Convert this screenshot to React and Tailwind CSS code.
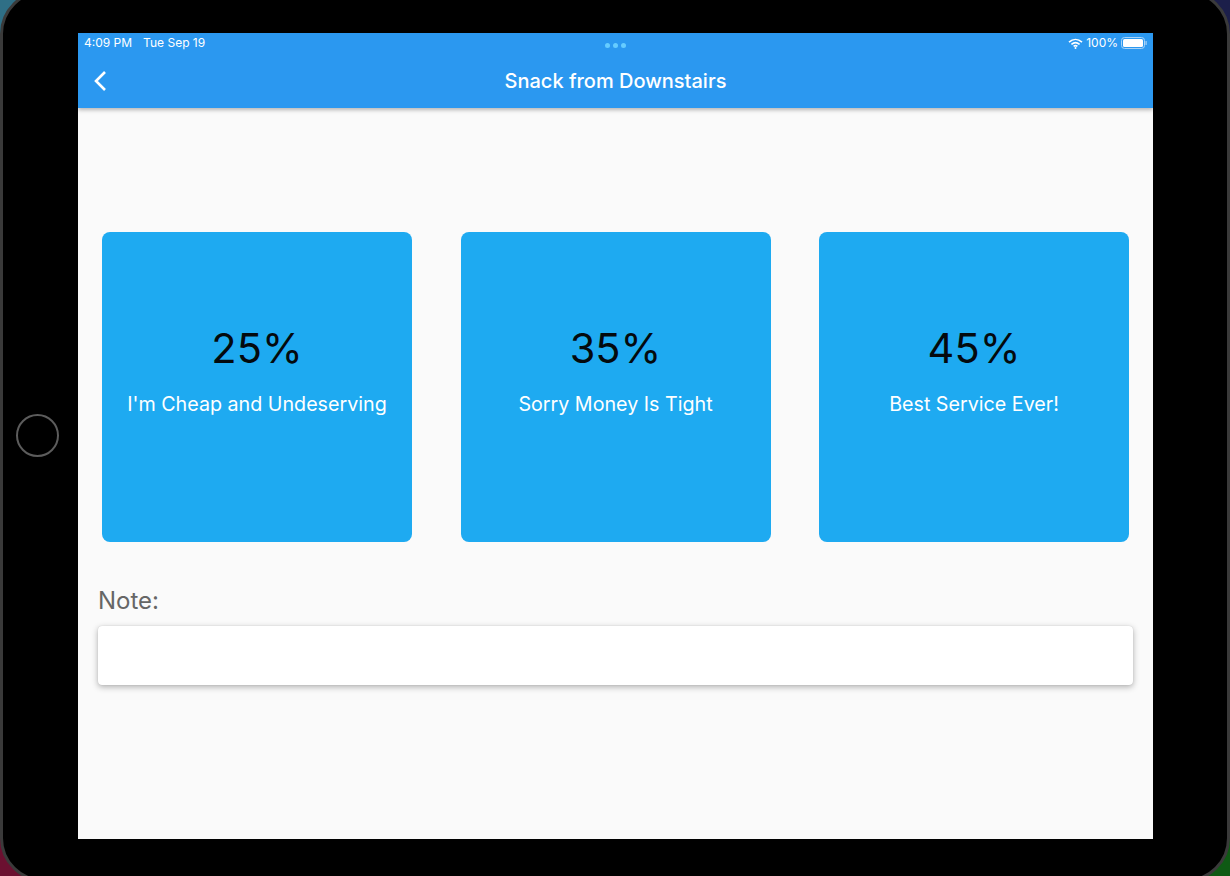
function Card({ pct, label }) {
  return (
    <div className="w-[310px] h-[310px] rounded-[8px] bg-[#1eaaf1] flex flex-col items-center pt-[90px]">
      <div className="text-[41.5px] leading-[52px] text-[#040a0e]">{pct}</div>
      <div className="mt-[17px] text-[19.7px] leading-[26px] text-white">{label}</div>
    </div>
  );
}

export default function App() {
  return (
    <div className="relative w-[1230px] h-[876px] overflow-hidden bg-black font-['Inter',sans-serif]">
      <div className="absolute left-0 top-0 w-[40px] h-[40px] bg-[#2f6f86]" />
      <div className="absolute right-0 top-0 w-[40px] h-[40px] bg-[#1c1f4a]" />
      <div className="absolute left-0 bottom-0 w-[40px] h-[40px] bg-[#6b1030]" />
      <div className="absolute right-0 bottom-0 w-[40px] h-[40px] bg-[#0f5a14]" />
      <div className="absolute inset-x-0 top-[-10px] bottom-[-6px] rounded-[44px] border-[3px] border-[#3a3a3a] bg-black" />
      <div className="absolute left-[16px] top-[414px] w-[43px] h-[43px] rounded-full border-2 border-[#5c5c5c]" />

      <div className="relative pl-[78px] pt-[33px]">
        <div className="w-[1075px] h-[806px] bg-[#fafafa] flex flex-col">
          <header className="relative h-[75px] bg-[#2b98f0] shadow-[0_2px_4px_rgba(0,0,0,0.28)] shrink-0">
            <div className="flex items-center justify-between h-[20px] pl-[6px] pr-[6px] text-[12px] text-white">
              <div className="flex gap-[11px]">
                <span>4:09 PM</span>
                <span>Tue Sep 19</span>
              </div>
              <div className="flex items-center gap-[3px]">
                <svg width="15" height="11" viewBox="0 0 15 11" fill="none" stroke="white" strokeWidth="1.6">
                  <path d="M1 4.2C5 .6 10 .6 14 4.2" />
                  <path d="M3.4 6.4c2.6-2.2 5.6-2.2 8.2 0" />
                  <path d="M5.6 8.4c1.2-.9 2.6-.9 3.8 0" />
                  <circle cx="7.5" cy="9.9" r="1" fill="white" stroke="none" />
                </svg>
                <span>100%</span>
                <svg width="26" height="12" viewBox="0 0 26 12">
                  <rect x="0.5" y="0.5" width="23" height="11" rx="3" fill="none" stroke="#a9d4f8" />
                  <rect x="2" y="2" width="20" height="8" rx="1.5" fill="white" />
                  <rect x="24.5" y="4" width="1.2" height="4" rx="0.6" fill="#a9d4f8" />
                </svg>
              </div>
            </div>
            <div className="absolute left-[527px] top-[10px] flex gap-[3px]">
              <span className="w-[5px] h-[5px] rounded-full bg-[#66ccff]" />
              <span className="w-[5px] h-[5px] rounded-full bg-[#66ccff]" />
              <span className="w-[5px] h-[5px] rounded-full bg-[#66ccff]" />
            </div>
            <div className="relative flex items-center justify-center h-[56px]">
              <svg className="absolute left-[15px] top-[17px]" width="14" height="22" viewBox="0 0 14 22" fill="none" stroke="white" strokeWidth="2.6">
                <path d="M12 2 3 11l9 9" />
              </svg>
              <h1 className="text-[20px] font-medium text-white leading-[28px]">Snack from Downstairs</h1>
            </div>
          </header>

          <main className="flex flex-col">
            <div className="flex justify-between pl-[24px] pr-[24px] pt-[124px]">
              <Card pct="25%" label="I'm Cheap and Undeserving" />
              <Card pct="35%" label="Sorry Money Is Tight" />
              <Card pct="45%" label="Best Service Ever!" />
            </div>
            <div className="pl-[20px] pr-[20px] mt-[44.5px]">
              <div className="text-[24px] leading-[28px] text-[#666666]">Note:</div>
              <div className="mt-[11px] h-[59px] rounded-[4px] bg-white shadow-[0_2px_6px_rgba(0,0,0,0.3),0_0_1px_rgba(0,0,0,0.2)]" />
            </div>
          </main>
        </div>
      </div>
    </div>
  );
}
